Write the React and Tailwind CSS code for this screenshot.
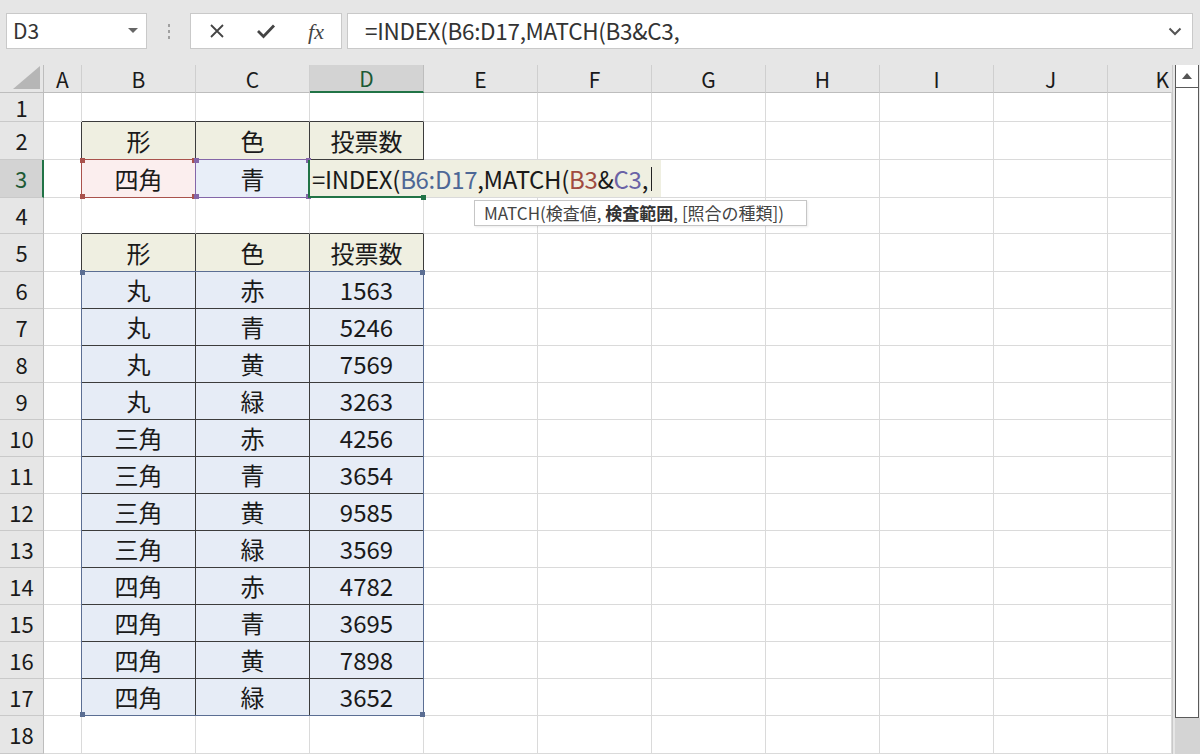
import React from 'react';

const cols = ['A', 'B', 'C', 'D', 'E', 'F', 'G', 'H', 'I', 'J', 'K'];
// row heights for rows 1..18
const rowH = [29, 38, 38, 36, 38, 37, 37, 37, 37, 37, 37, 37, 37, 37, 37, 37, 37, 38];

const data = [
  ['丸', '赤', '1563'],
  ['丸', '青', '5246'],
  ['丸', '黄', '7569'],
  ['丸', '緑', '3263'],
  ['三角', '赤', '4256'],
  ['三角', '青', '3654'],
  ['三角', '黄', '9585'],
  ['三角', '緑', '3569'],
  ['四角', '赤', '4782'],
  ['四角', '青', '3695'],
  ['四角', '黄', '7898'],
  ['四角', '緑', '3652'],
];

const font = { fontFamily: '"Noto Sans CJK JP", "Noto Sans", sans-serif' };

function inTable(r, c) {
  return (r === 2 || r === 3 || (r >= 5 && r <= 17)) && c >= 1 && c <= 3;
}

function cellText(r, c) {
  if (r === 2 || r === 5) return ['形', '色', '投票数'][c - 1];
  if (r === 3 && c === 1) return '四角';
  if (r === 3 && c === 2) return '青';
  if (r >= 6 && r <= 17 && c >= 1 && c <= 3) return data[r - 6][c - 1];
  return '';
}

function cellBg(r, c) {
  if (!inTable(r, c)) return 'bg-white';
  if (r === 2 || r === 5) return 'bg-[#efefe1]';
  if (r === 3 && c === 1) return 'bg-[#fbeeee]';
  if (r === 3 && c === 2) return 'bg-[#e8eef8]';
  if (r === 3 && c === 3) return 'bg-[#efefe1]';
  return 'bg-[#e6ecf6]';
}

function Corners({ color }) {
  return (
    <>
      <span className={`absolute -left-[2px] -top-[2px] w-[5px] h-[5px] ${color}`} />
      <span className={`absolute -right-[2px] -top-[2px] w-[5px] h-[5px] ${color}`} />
      <span className={`absolute -left-[2px] -bottom-[2px] w-[5px] h-[5px] ${color}`} />
      <span className={`absolute -right-[2px] -bottom-[2px] w-[5px] h-[5px] ${color}`} />
    </>
  );
}

function Cell({ r, c }) {
  const right = inTable(r, c) || inTable(r, c + 1) ? 'border-r-[#3c3c3c]' : 'border-r-[#dadada]';
  const bottom = inTable(r, c) || inTable(r + 1, c) ? 'border-b-[#3c3c3c]' : 'border-b-[#dadada]';
  const text = cellText(r, c);

  return (
    <div
      className={`relative border-r border-b ${right} ${bottom} ${cellBg(r, c)} flex items-center justify-center text-[24px] leading-[30px] text-[#1a1a1a]`}
      style={{ height: rowH[r - 1] }}
    >
      {text}

      {r === 3 && c === 1 && (
        <div className="absolute -inset-px z-10 border border-[#a9524c]">
          <Corners color="bg-[#a9524c]" />
        </div>
      )}
      {r === 3 && c === 2 && (
        <div className="absolute -inset-px z-10 border border-[#8466a8]">
          <Corners color="bg-[#8466a8]" />
        </div>
      )}
      {r === 3 && c === 3 && (
        <>
          {/* edit box */}
          <div className="absolute left-[-1px] top-0 bottom-0 w-[352px] z-10 bg-[#efefe1] flex items-center pl-[3px] text-[24px] leading-[30px] tracking-[-0.3px] text-[#1a1a1a] whitespace-nowrap">
            <span>=INDEX(</span>
            <span className="text-[#4d6796]">B6:D17</span>
            <span>,MATCH(</span>
            <span className="text-[#a04a3f]">B3</span>
            <span>&amp;</span>
            <span className="text-[#6a62a6]">C3</span>
            <span>,</span>
            <span className="inline-block w-px h-[24px] bg-[#222] ml-[3px]" />
          </div>
          <div className="absolute left-[-2px] top-0 bottom-[-1px] w-[2px] z-20 bg-[#217346]" />
          <div className="absolute left-[-2px] right-[-1px] bottom-[-1px] h-[2px] z-20 bg-[#217346]" />
          <span className="absolute -right-[3px] -bottom-[3px] w-[5px] h-[5px] z-20 bg-[#217346]" />
          {/* tooltip */}
          <div className="absolute left-[164px] top-[40px] z-20 h-[26px] w-[333px] px-[9px] flex items-center bg-white border border-[#c6c6c6] text-[17px] leading-[22px] text-[#444] whitespace-nowrap shadow-[1px_1px_2px_rgba(0,0,0,0.08)]">
            MATCH(検査値,&nbsp;<b className="font-bold text-[#333]">検査範囲</b>, [照合の種類])
          </div>
        </>
      )}
      {r === 6 && c === 1 && (
        <div className="absolute left-[-1px] top-[-1px] w-[343px] h-[445px] z-10 border border-[#5b6e93] pointer-events-none">
          <Corners color="bg-[#5b6e93]" />
        </div>
      )}
    </div>
  );
}

function Toolbar() {
  return (
    <div className="h-[65px] flex items-start pt-[13px] pl-[6px] bg-[#e6e6e6]">
      {/* name box */}
      <div className="w-[141px] h-[36px] bg-white border border-[#c9c9c9] flex items-center justify-between pl-[6px] pr-[8px]">
        <span className="text-[21px] text-[#333]">D3</span>
        <svg width="10" height="6" viewBox="0 0 10 6">
          <path d="M0 0 L10 0 L5 5 Z" fill="#666" />
        </svg>
      </div>
      {/* dots */}
      <div className="w-[43px] h-[36px] flex flex-col items-center justify-center gap-[3px]">
        <span className="w-[2px] h-[3px] bg-[#a0a0a0]" />
        <span className="w-[2px] h-[3px] bg-[#a0a0a0]" />
        <span className="w-[2px] h-[3px] bg-[#a0a0a0]" />
      </div>
      {/* buttons */}
      <div className="w-[152px] h-[36px] bg-white border border-[#c9c9c9] flex items-center">
        <div className="w-[50px] flex justify-center pl-[2px]">
          <svg width="16" height="16" viewBox="0 0 16 16">
            <path d="M2 2 L14 14 M14 2 L2 14" stroke="#444" strokeWidth="1.8" />
          </svg>
        </div>
        <div className="w-[50px] flex justify-center">
          <svg width="20" height="16" viewBox="0 0 20 16">
            <path d="M2 8 L7.5 13.5 L18 2.5" stroke="#444" strokeWidth="2.8" fill="none" />
          </svg>
        </div>
        <div className="w-[50px] flex justify-center">
          <span className="italic text-[22px] text-[#444]" style={{ fontFamily: '"Liberation Serif", serif' }}>
            fx
          </span>
        </div>
      </div>
      {/* formula input */}
      <div className="ml-[5px] w-[846px] h-[36px] bg-white border border-[#c9c9c9] flex items-center justify-between pl-[17px] pr-[10px]">
        <span className="text-[22.5px] text-[#333] tracking-[-0.3px]">=INDEX(B6:D17,MATCH(B3&amp;C3,</span>
        <svg width="14" height="9" viewBox="0 0 14 9">
          <path d="M1.5 1.5 L7 7 L12.5 1.5" stroke="#555" strokeWidth="2" fill="none" />
        </svg>
      </div>
    </div>
  );
}

function Sheet() {
  const rows = Array.from({ length: 18 }, (_, i) => i + 1);
  return (
    <div className="grid grid-cols-[44px_38px_114px_114px_114px_114px_114px_114px_114px_114px_114px_64px] w-[1172px] bg-white">
      {/* column headers */}
      <div className="h-[28px] bg-[#e6e6e6] border-r border-b border-[#bdbdbd] flex items-end justify-end pr-[3px] pb-[3px]">
        <svg width="27" height="23" viewBox="0 0 27 23">
          <path d="M27 0 L27 23 L0 23 Z" fill="#b6b6b6" />
        </svg>
      </div>
      {cols.map((col, i) => (
        <div
          key={col}
          className={`h-[28px] flex items-center justify-center text-[21px] leading-[24px] ${
            col === 'D'
              ? 'bg-[#d3d3d3] border-b-2 border-b-[#217346] text-[#1d5a35] border-r border-r-[#bdbdbd]'
              : `bg-[#e6e6e6] border-b border-b-[#bdbdbd] text-[#1a1a1a] border-r ${i === 10 ? 'border-r-transparent justify-end pr-[2px]' : 'border-r-[#cfcfcf]'}`
          }`}
        >
          {col}
        </div>
      ))}

      {rows.map((r) => (
        <React.Fragment key={r}>
          <div
            className={`flex items-center justify-center text-[22px] leading-[27px] border-b ${
              r === 3
                ? 'bg-[#d3d3d3] text-[#1d5a35] border-r-2 border-r-[#217346] border-b-[#c9c9c9]'
                : 'bg-[#e6e6e6] text-[#1a1a1a] border-r border-r-[#bdbdbd] border-b-[#c9c9c9]'
            }`}
            style={{ height: rowH[r - 1] }}
          >
            {r}
          </div>
          {cols.map((col, c) => (
            <Cell key={col} r={r} c={c} />
          ))}
        </React.Fragment>
      ))}
    </div>
  );
}

function Scrollbar() {
  return (
    <div className="w-[28px] flex flex-col bg-[#e6e6e6] border-l border-[#c9c9c9]">
      <div className="h-[654px] mt-[-1px] ml-[2px] w-[24px] bg-white border border-[#5a5a5a] flex flex-col">
        <div className="h-[23px] border-b border-[#5a5a5a] flex items-center justify-center">
          <svg width="10" height="6" viewBox="0 0 10 6">
            <path d="M0 6 L10 6 L5 0 Z" fill="#555" />
          </svg>
        </div>
      </div>
      <div className="flex-1 bg-[#d4d4d4] ml-[2px]" />
    </div>
  );
}

export default function App() {
  return (
    <div className="w-[1200px] h-[754px] overflow-hidden bg-[#e6e6e6]" style={font}>
      <Toolbar />
      <div className="flex h-[689px] overflow-hidden">
        <Sheet />
        <Scrollbar />
      </div>
    </div>
  );
}
